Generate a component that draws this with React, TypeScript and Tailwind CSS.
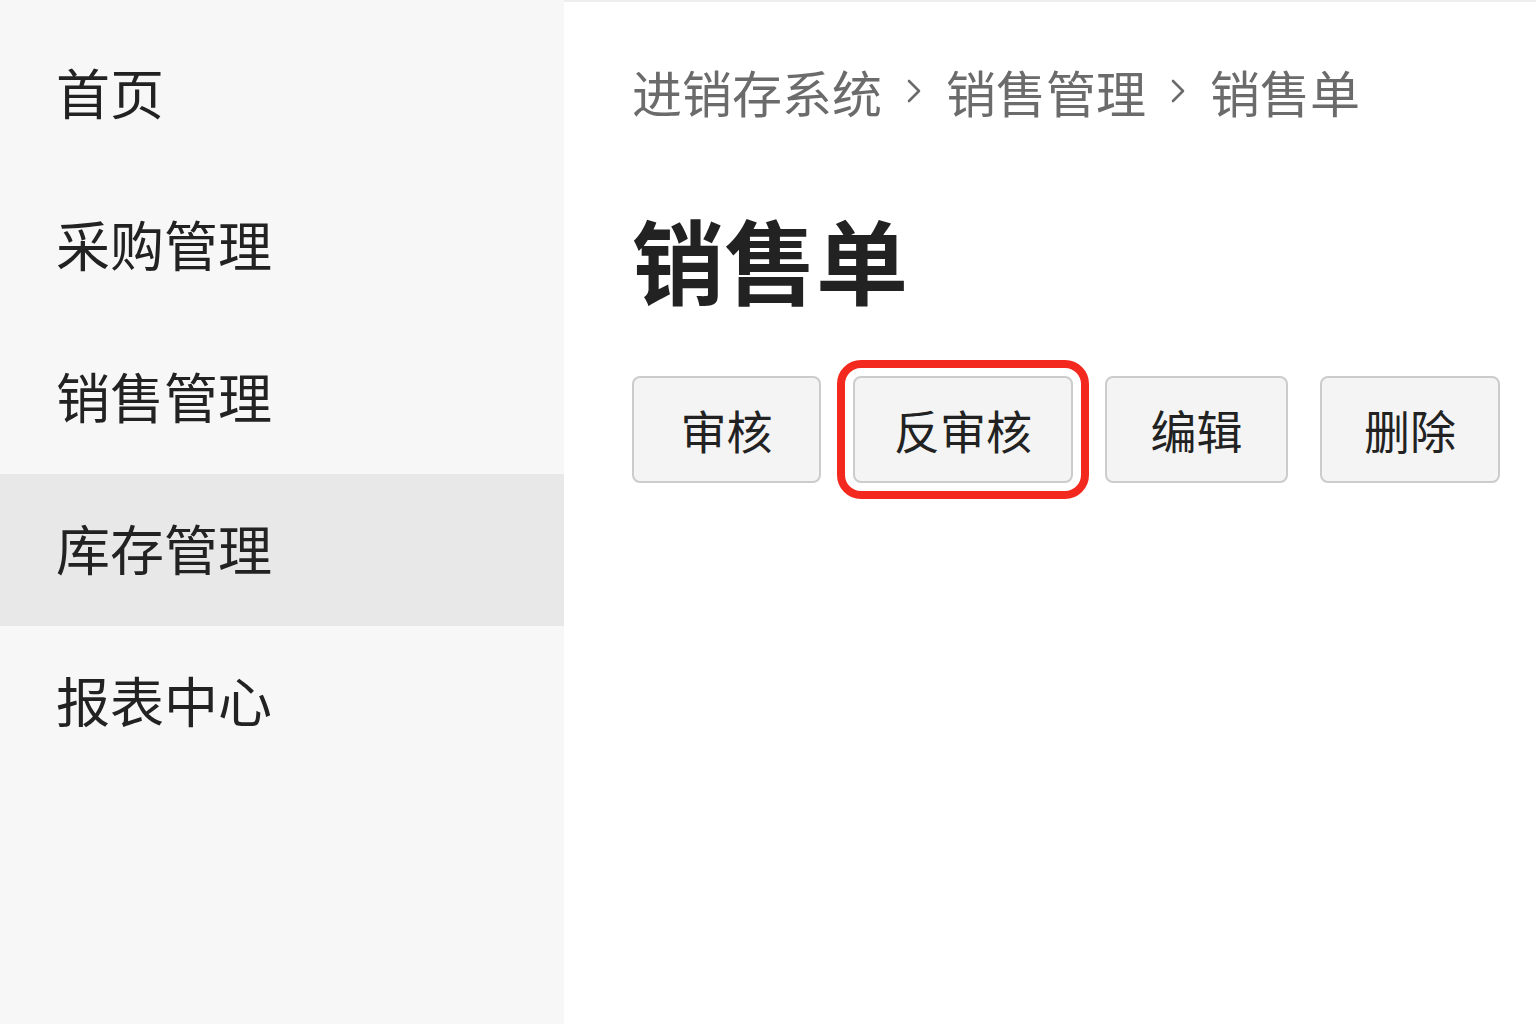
const menu = ["首页", "采购管理", "销售管理", "库存管理", "报表中心"];

const Chevron = () => (
  <svg width="20" height="32" viewBox="0 0 20 32" className="mx-[22px] text-[#6b6b6b]">
    <path d="M5 6 L15 16 L5 26" fill="none" stroke="currentColor" strokeWidth="2.6" strokeLinecap="round" strokeLinejoin="round" />
  </svg>
);

const App = () => {
  return (
    <div className="flex w-[1536px] h-[1024px] bg-white overflow-hidden" style={{ fontFamily: '"Noto Sans CJK SC", "Noto Sans", sans-serif' }}>
      <aside className="w-[564px] h-full bg-[#f7f7f7] pt-[18px] flex flex-col">
        {menu.map((item) => (
          <div
            key={item}
            className={`h-[152px] flex items-center pl-14 pb-1 text-[54px] leading-none text-[#222] ${item === "库存管理" ? "bg-[#e8e8e8]" : ""}`}
          >
            {item}
          </div>
        ))}
      </aside>
      <main className="flex-1 border-t-2 border-[#eeeeee] pl-[68px] pt-[64px]">
        <div className="flex items-center text-[50px] leading-none text-[#6b6b6b]">
          <span>进销存系统</span>
          <Chevron />
          <span>销售管理</span>
          <Chevron />
          <span>销售单</span>
        </div>
        <h1 className="mt-[96px] text-[92px] leading-none font-bold text-[#222]">销售单</h1>
        <div className="mt-[72px] flex gap-8">
          <button className="w-[189px] h-[107px] rounded-lg border-2 border-[#cccccc] bg-[#f4f4f4] text-[46px] text-[#222]">审核</button>
          <button className="w-[220px] h-[107px] rounded-lg border-2 border-[#cccccc] bg-[#f4f4f4] text-[46px] text-[#222] outline-solid outline-[8px] outline-[#f3291f] outline-offset-[8px]">反审核</button>
          <button className="w-[183px] h-[107px] rounded-lg border-2 border-[#cccccc] bg-[#f4f4f4] text-[46px] text-[#222]">编辑</button>
          <button className="w-[180px] h-[107px] rounded-lg border-2 border-[#cccccc] bg-[#f4f4f4] text-[46px] text-[#222]">删除</button>
        </div>
      </main>
    </div>
  );
};

export default App;
